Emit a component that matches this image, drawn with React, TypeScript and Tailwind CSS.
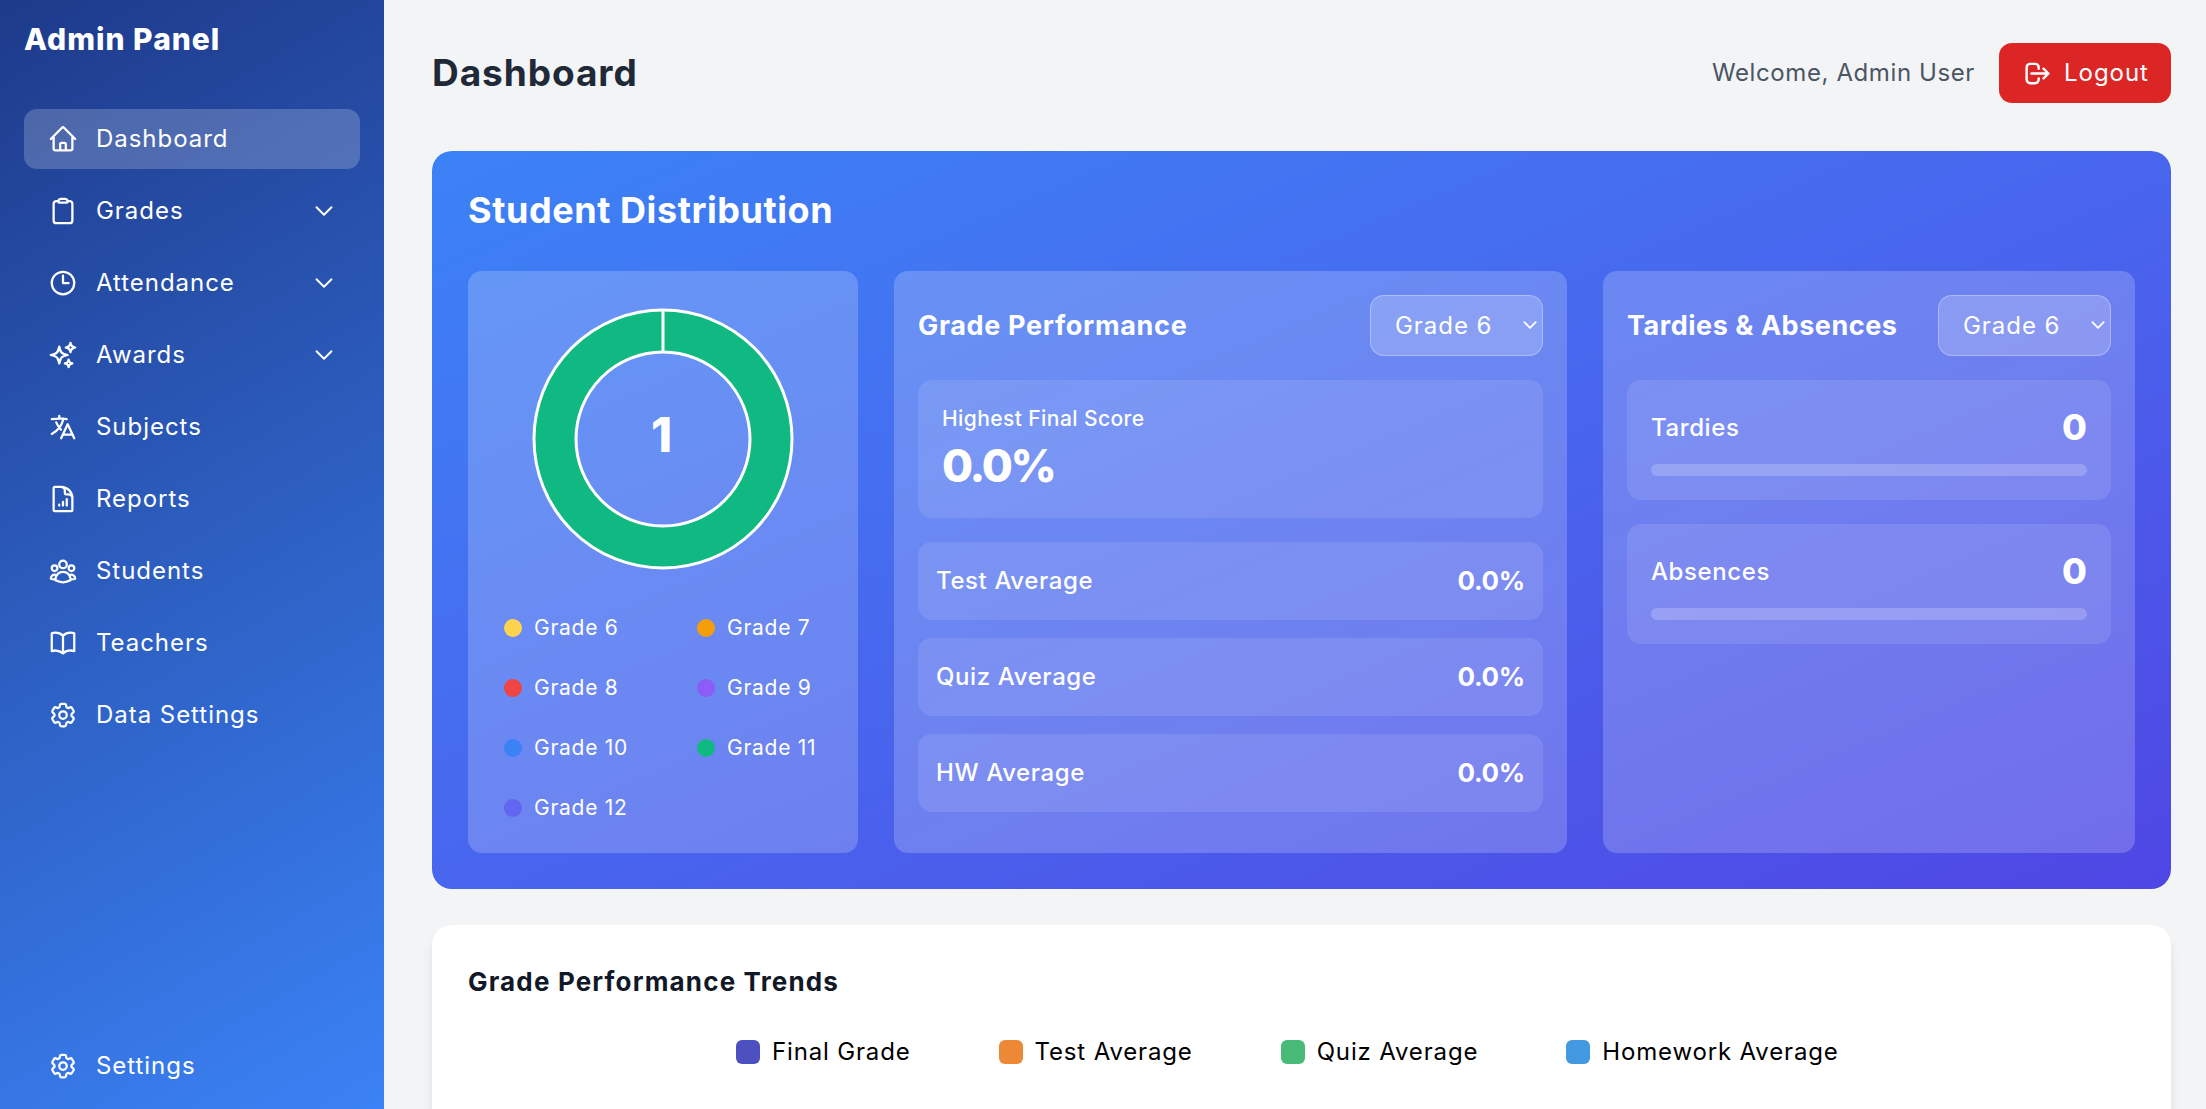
import {
  HiOutlineHome,
  HiOutlineClipboard,
  HiOutlineClock,
  HiOutlineSparkles,
  HiOutlineLanguage,
  HiOutlineDocumentChartBar,
  HiOutlineUserGroup,
  HiOutlineBookOpen,
  HiOutlineCog6Tooth,
  HiOutlineChevronDown,
} from "react-icons/hi2";
import { HiOutlineLogout } from "react-icons/hi";

const navItems = [
  { label: "Dashboard", icon: HiOutlineHome, active: true },
  { label: "Grades", icon: HiOutlineClipboard, expand: true },
  { label: "Attendance", icon: HiOutlineClock, expand: true },
  { label: "Awards", icon: HiOutlineSparkles, expand: true },
  { label: "Subjects", icon: HiOutlineLanguage },
  { label: "Reports", icon: HiOutlineDocumentChartBar },
  { label: "Students", icon: HiOutlineUserGroup },
  { label: "Teachers", icon: HiOutlineBookOpen },
  { label: "Data Settings", icon: HiOutlineCog6Tooth },
];

const gradeLegend = [
  { label: "Grade 6", color: "bg-[#fcd34d]" },
  { label: "Grade 7", color: "bg-[#f59e0b]" },
  { label: "Grade 8", color: "bg-[#ef4444]" },
  { label: "Grade 9", color: "bg-[#8b5cf6]" },
  { label: "Grade 10", color: "bg-[#3b82f6]" },
  { label: "Grade 11", color: "bg-[#10b981]" },
  { label: "Grade 12", color: "bg-[#6366f1]" },
];

const trendLegend = [
  { label: "Final Grade", color: "bg-[#4c51bf]" },
  { label: "Test Average", color: "bg-[#ed8936]" },
  { label: "Quiz Average", color: "bg-[#48bb78]" },
  { label: "Homework Average", color: "bg-[#4299e1]" },
];

const NavLink = ({
  label,
  icon: Icon,
  active,
  expand,
}: {
  label: string;
  icon: React.ComponentType<{ className?: string; strokeWidth?: number }>;
  active?: boolean;
  expand?: boolean;
}) => {
  return (
    <a
      className={`flex items-center h-[60px] pl-[24px] pr-[24px] rounded-[13px] ${
        active ? "bg-white/20" : ""
      }`}
    >
      <Icon className="w-[30px] h-[30px] shrink-0" strokeWidth={1.8} />
      <span className="ml-[18px] flex-1 text-[24px] tracking-[0.04em]">{label}</span>
      {expand && <HiOutlineChevronDown className="w-[24px] h-[24px]" strokeWidth={1.9} />}
    </a>
  );
};

const GradeSelect = () => {
  return (
    <div className="relative shrink-0">
      <select className="appearance-none w-[173px] h-[61px] pl-[24px] rounded-[14px] bg-white/20 border border-white/30 text-white text-[24px] tracking-[0.04em]">
        <option className="text-gray-800">Grade 6</option>
      </select>
      <HiOutlineChevronDown
        className="absolute right-[4px] top-[21px] w-[18px] h-[18px] text-white pointer-events-none"
        strokeWidth={2.4}
      />
    </div>
  );
};

const StatRow = ({ label }: { label: string }) => {
  return (
    <div className="flex items-center justify-between h-[78px] px-[18px] rounded-[14px] bg-white/10">
      <span className="text-[24px] font-medium tracking-[0.025em]">{label}</span>
      <span className="pb-[2px] text-[26px] font-bold tracking-[-0.01em]">0.0%</span>
    </div>
  );
};

const CountCard = ({ label }: { label: string }) => {
  return (
    <div className="h-[120px] pt-[27px] px-[24px] rounded-[14px] bg-white/10">
      <div className="flex items-center justify-between h-[40px]">
        <span className="pt-[2px] text-[24px] font-medium tracking-[0.025em]">{label}</span>
        <span className="text-[36px] font-extrabold">0</span>
      </div>
      <div className="mt-[17px] h-[12px] rounded-full bg-white/20" />
    </div>
  );
};

export default function App() {
  return (
    <div className="flex h-screen overflow-hidden bg-[#f3f4f6] font-['Inter',sans-serif]">
      {/* Sidebar */}
      <aside className="w-[384px] shrink-0 flex flex-col px-[24px] pb-[13px] text-white bg-[linear-gradient(150deg,#1e3a8a,#3b82f6)]">
        <h1 className="mt-[19px] mb-[50px] h-[40px] leading-[40px] text-[30px] font-extrabold tracking-[0.033em]">Admin Panel</h1>
        <nav className="flex flex-col gap-[12px]">
          {navItems.map((item) => (
            <NavLink key={item.label} {...item} />
          ))}
        </nav>
        <div className="mt-auto">
          <NavLink label="Settings" icon={HiOutlineCog6Tooth} />
        </div>
      </aside>

      {/* Main */}
      <main className="flex-1 min-w-0 pl-[48px] pr-[35px] pt-[43px]">
        <header className="flex items-center justify-between h-[60px] mb-[48px]">
          <h2 className="text-[37px] font-bold text-[#1f2937] tracking-[0.025em]">Dashboard</h2>
          <div className="flex items-center">
            <span className="text-[24px] text-[#4b5563] tracking-[0.025em]">Welcome, Admin User</span>
            <button className="ml-[24px] flex items-center h-[60px] w-[172px] pl-[24px] rounded-[13px] bg-[#dc2626] text-white text-[24px] tracking-[0.04em]">
              <HiOutlineLogout className="w-[29px] h-[29px]" />
              <span className="ml-[12px]">Logout</span>
            </button>
          </div>
        </header>

        <section className="p-[36px] rounded-[20px] text-white bg-gradient-to-br from-[#3b82f6] to-[#4f46e5]">
          <h3 className="h-[45px] leading-[47px] mb-[39px] text-[36px] font-bold tracking-[0.016em]">Student Distribution</h3>
          <div className="grid grid-cols-[390px_673px_532px] gap-[36px]">
            {/* Donut */}
            <div className="rounded-[14px] bg-white/20 pt-[38px] pb-[15px] px-[36px]">
              <div className="relative w-[260px] h-[260px] mx-auto">
                <svg viewBox="0 0 260 260" className="w-full h-full overflow-visible">
                  <circle cx="130" cy="130" r="108.5" fill="none" stroke="#10b981" strokeWidth="43" />
                  <circle cx="130" cy="130" r="129" fill="none" stroke="#fff" strokeWidth="3" />
                  <circle cx="130" cy="130" r="87" fill="none" stroke="#fff" strokeWidth="3" />
                  <line x1="130" y1="1" x2="130" y2="44" stroke="#fff" strokeWidth="3" />
                </svg>
                <div className="absolute inset-0 flex items-center justify-center pb-[8px] pr-[3px] text-[48px] font-extrabold">1</div>
              </div>
              <div className="mt-[29px] grid grid-cols-[193px_1fr]">
                {gradeLegend.map((g) => (
                  <div key={g.label} className="flex items-center h-[60px]">
                    <span className={`w-[18px] h-[18px] rounded-full ${g.color}`} />
                    <span className="ml-[12px] text-[21px] tracking-[0.035em]">{g.label}</span>
                  </div>
                ))}
              </div>
            </div>

            {/* Grade performance */}
            <div className="rounded-[14px] bg-white/20 pt-[24px] px-[24px]">
              <div className="flex items-center justify-between mb-[24px]">
                <h4 className="pt-[2px] text-[27px] font-bold tracking-[0.025em]">Grade Performance</h4>
                <GradeSelect />
              </div>
              <div className="h-[138px] pt-[25px] px-[24px] rounded-[14px] bg-white/10 mb-[24px]">
                <div className="leading-[28px] text-[21px] font-medium tracking-[0.02em]">Highest Final Score</div>
                <div className="mt-[5px] leading-[56px] text-[45px] font-extrabold tracking-[-0.05em]">0.0%</div>
              </div>
              <div className="flex flex-col gap-[18px]">
                <StatRow label="Test Average" />
                <StatRow label="Quiz Average" />
                <StatRow label="HW Average" />
              </div>
            </div>

            {/* Tardies */}
            <div className="rounded-[14px] bg-white/20 pt-[24px] px-[24px]">
              <div className="flex items-center justify-between mb-[24px]">
                <h4 className="pt-[2px] text-[27px] font-bold tracking-[0.02em]">Tardies &amp; Absences</h4>
                <GradeSelect />
              </div>
              <div className="flex flex-col gap-[24px]">
                <CountCard label="Tardies" />
                <CountCard label="Absences" />
              </div>
            </div>
          </div>
        </section>

        <section className="mt-[36px] h-[500px] p-[36px] rounded-[20px] bg-white shadow-lg">
          <h3 className="h-[42px] leading-[42px] text-[26px] font-bold text-[#111827] tracking-[0.045em]">Grade Performance Trends</h3>
          <div className="mt-[31px] ml-[268px] flex items-center gap-[88px]">
            {trendLegend.map((t) => (
              <div key={t.label} className="flex items-center">
                <span className={`w-[24px] h-[24px] rounded-[6px] ${t.color}`} />
                <span className="ml-[12px] text-[24px] text-black tracking-[0.035em]">{t.label}</span>
              </div>
            ))}
          </div>
        </section>
      </main>
    </div>
  );
}
